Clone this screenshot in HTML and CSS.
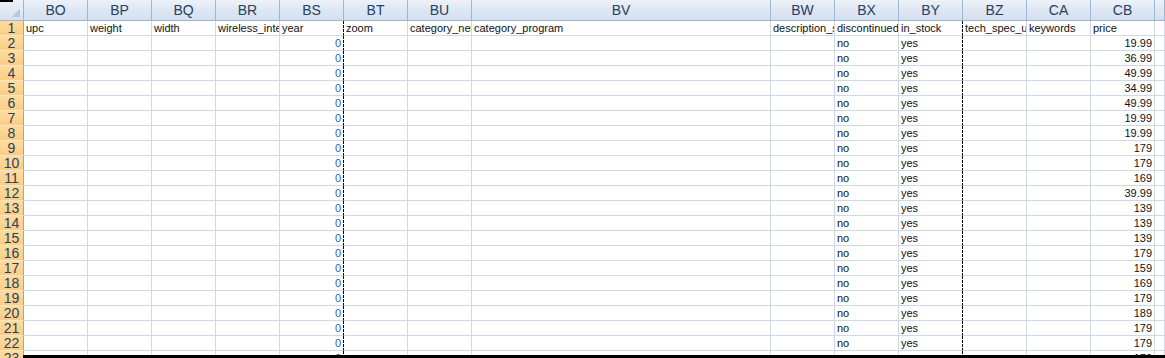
FILE: index.html
```html
<!DOCTYPE html>
<html>
<head>
<meta charset="utf-8">
<link rel="stylesheet" href="styles.css">
</head>
<body>
<div class="sheet" id="sheet"></div>
<div class="bottom-bar"></div>
<script src="script.js"></script>
</body>
</html>
```

FILE: styles.css
```css
body {
    margin: 0;
    background: #fff;
    overflow: hidden;
    font-family: "Liberation Sans", Arial, sans-serif;
}

.sheet {
    display: grid;
    grid-template-columns: 24px repeat(7, 64px) 299px repeat(6, 64px) 1fr;
    grid-template-rows: 21px;
    grid-auto-rows: 15px;
    height: 358px;
    overflow: hidden;
}

.cell {
    box-sizing: border-box;
    border-right: 1px solid #d0d7e5;
    border-bottom: 1px solid #d0d7e5;
    padding: 0 2px;
    font-size: 11px;
    line-height: 14px;
    color: #111;
    white-space: nowrap;
    overflow: hidden;
}
.cell.num {
    text-align: right;
}
.cell.zero {
    color: #2d62b0;
}
.cell.pb {
    border-right: 1px dashed #000;
}

.col-head {
    box-sizing: border-box;
    background: linear-gradient(to bottom, #edf2f9 0%, #dee7f4 45%, #d5e0ef 100%);
    border-right: 1px solid #9eb6ce;
    border-bottom: 1px solid #9eb6ce;
    color: #27415f;
    font-size: 14px;
    line-height: 21px;
    text-align: center;
}

.corner {
    box-sizing: border-box;
    background:
        linear-gradient(#000, #000) no-repeat 0 0 / 13px 2px,
        linear-gradient(135deg, transparent 50%, #b5c9e2 50%) no-repeat right 3px bottom 3px / 9px 9px,
        linear-gradient(to bottom, #edf2f9 0%, #d5e0ef 100%);
    border-right: 1px solid #9eb6ce;
    border-bottom: 1px solid #9eb6ce;
}

.row-head {
    box-sizing: border-box;
    background: linear-gradient(to bottom, #fedc9f 0%, #fbcd86 100%);
    border-right: 1px solid #f29436;
    border-bottom: 1px solid #fce5bd;
    color: #27415f;
    font-size: 14px;
    line-height: 15px;
    text-align: center;
}

.bottom-bar {
    position: absolute;
    left: 23px;
    right: 0;
    top: 355px;
    height: 3px;
    background: #000;
}
```

FILE: script.js
```js
var heads = ["BO", "BP", "BQ", "BR", "BS", "BT", "BU", "BV", "BW", "BX", "BY", "BZ", "CA", "CB", ""];
var fields = ["upc", "weight", "width", "wireless_interface", "year", "zoom", "category_network",
    "category_program", "description_short", "discontinued", "in_stock", "tech_spec_url", "keywords", "price", ""];
var prices = ["19.99", "36.99", "49.99", "34.99", "49.99", "19.99", "19.99", "179", "179", "169", "39.99",
    "139", "139", "139", "179", "159", "169", "179", "189", "179", "179", "179"];

var sheet = document.getElementById("sheet");

function add(cls, text) {
    var el = document.createElement("div");
    el.className = cls;
    el.textContent = text || "";
    sheet.appendChild(el);
}

// column letters
add("corner");
heads.forEach(function (h) { add("col-head", h); });

// row 1 = field names, rows 2..23 = data
for (var r = 1; r <= 23; r++) {
    add("row-head", r);
    for (var c = 0; c < heads.length; c++) {
        var cls = "cell";
        var text = "";
        if (c === 4 || c === 10) cls += " pb";
        if (r === 1) {
            text = fields[c];
        } else if (c === 4) {
            cls += " num zero";
            text = "0";
        } else if (c === 9) {
            text = "no";
        } else if (c === 10) {
            text = "yes";
        } else if (c === 13) {
            cls += " num";
            text = prices[r - 2];
        }
        add(cls, text);
    }
}
```
